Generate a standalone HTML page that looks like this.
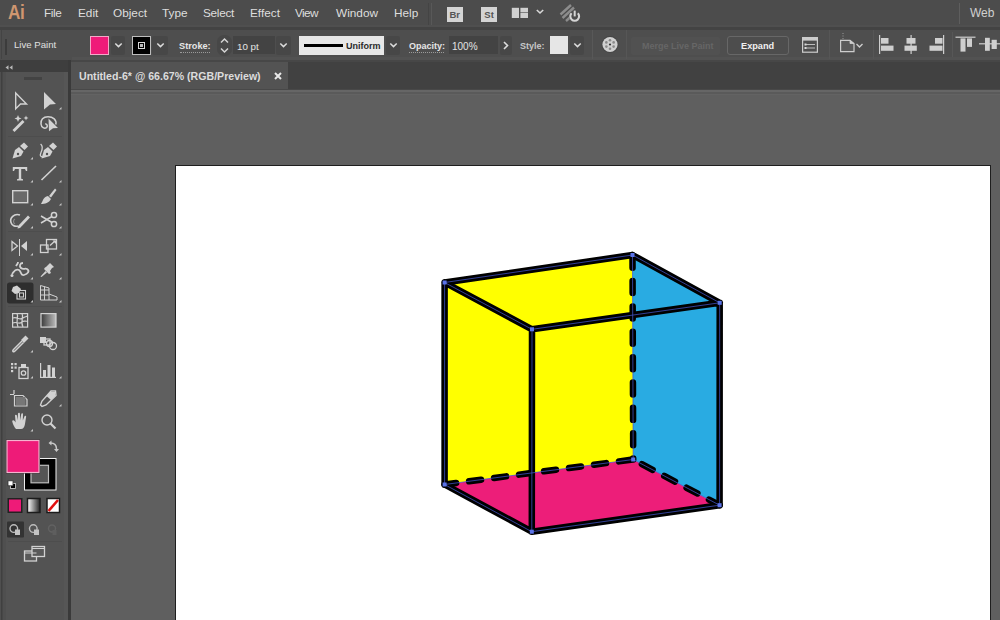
<!DOCTYPE html>
<html><head><meta charset="utf-8">
<style>
*{margin:0;padding:0;box-sizing:border-box}
html,body{width:1000px;height:620px;overflow:hidden;background:#5d5d5d;font-family:"Liberation Sans",sans-serif}
.a{position:absolute}
#menubar{left:0;top:0;width:1000px;height:26.5px;background:#4c4c4c;border-bottom:2.5px solid #4f4f4f}
#mline{left:0;top:26.5px;width:1000px;height:3px;background:#434343}
#optbar{left:0;top:29.5px;width:1000px;height:30.5px;background:#4e4e4e}
#tabbar{left:71px;top:60px;width:929px;height:29px;background:#414141}
#toolhdr{left:0;top:60px;width:68px;height:12px;background:#3e3e3e}
#toolbar{left:0;top:72px;width:68px;height:548px;background:#4f4f4f}
#toolin{left:6px;top:72px;width:58px;height:548px;background:#535353}
#gap{left:68px;top:60px;width:3px;height:560px;background:#3a3a3a}
#canvas{left:71px;top:89px;width:929px;height:531px;background:#5f5f5f}
#tab{left:71px;top:61.5px;width:217px;height:27.5px;background:#535353}
.menu{top:6px;font-size:11.8px;color:#dedede;white-space:nowrap;line-height:14px}
.ot{font-size:10px;color:#e0e0e0;white-space:nowrap;line-height:12px}
.dd{background:#474747;border-radius:2px}
.inp{background:#434343}
#artboard{left:175px;top:165px;width:816px;height:460px;background:#fff;border:1px solid #1e1e1e}
svg{position:absolute;overflow:visible}
</style></head><body>
<div class="a" id="menubar"></div>
<div class="a" id="mline"></div>
<div class="a" id="optbar"></div>
<div class="a" id="toolhdr"></div>
<div class="a" id="toolbar"></div>
<div class="a" id="toolin"></div>
<div class="a" style="left:64px;top:72px;width:4px;height:548px;background:#565656"></div>
<div class="a" id="gap"></div>
<div class="a" id="tabbar"></div>
<div class="a" id="tab"></div>
<div class="a" id="canvas"></div>
<div class="a" style="left:71px;top:88.5px;width:929px;height:1.5px;background:#484848"></div>
<div class="a" style="left:71px;top:90px;width:929px;height:2px;background:#666"></div>
<div class="a" style="left:71px;top:92px;width:929px;height:2px;background:#5a5a5a"></div>
<div class="a" style="left:71px;top:94px;width:929px;height:1px;background:#636363"></div>
<div class="a" id="artboard"></div>

<!-- CUBE -->
<svg style="left:0;top:0" width="1000" height="620" viewBox="0 0 1000 620">
<g stroke="none">
<polygon points="444.6,282.5 632.5,255 633.2,459.5 444.6,484.5" fill="#ffff00"/>
<polygon points="444.6,484.5 633.2,459.5 719.6,505.2 531.8,531.7" fill="#ed1e79"/>
<polygon points="632.5,255 719.7,302.8 719.6,505.2 633.2,459.5" fill="#29abe2"/>
</g>
<g fill="none" stroke="#000" stroke-width="6.5" stroke-linecap="round" stroke-linejoin="round">
<path d="M444.6,282.5 L632.5,255 M444.6,282.5 L532,329.3 M632.5,255 L719.7,302.8 M532,329.3 L719.7,302.8 M444.6,282.5 L444.6,484.5 M532,329.3 L531.8,531.7 M719.7,302.8 L719.6,505.2 M444.6,484.5 L531.8,531.7 L719.6,505.2"/>
<path stroke-dasharray="12 13.2" stroke-dashoffset="0.45" d="M444.6,484.5 L633.2,459.5"/>
<path stroke-dasharray="12.1 13.2" stroke-dashoffset="-9.85" d="M633.2,459.5 L719.6,505.2"/>
<path stroke-dasharray="12 13.37" stroke-dashoffset="-0.65" d="M632.5,255 L633.2,459.5"/>
</g>
<g fill="none" stroke="#4356c8" stroke-width="0.75"><path d="M444.6,282.5 L632.5,255 M444.6,282.5 L532,329.3 M632.5,255 L719.7,302.8 M532,329.3 L719.7,302.8 M444.6,282.5 L444.6,484.5 M532,329.3 L531.8,531.7 M719.7,302.8 L719.6,505.2 M444.6,484.5 L531.8,531.7 L719.6,505.2 M444.6,484.5 L633.2,459.5 L719.6,505.2 M632.5,255 L633.2,459.5"/></g>
<g fill="#5b73e8"><rect x="442.6" y="280.5" width="4" height="4"/><rect x="530" y="327.3" width="4" height="4"/><rect x="630.5" y="253" width="4" height="4"/><rect x="717.7" y="300.8" width="4" height="4"/><rect x="442.6" y="482.5" width="4" height="4"/><rect x="529.8" y="529.7" width="4" height="4"/><rect x="631.2" y="457.5" width="4" height="4"/><rect x="717.6" y="503.2" width="4" height="4"/></g>
</svg>
<!-- MENU BAR -->
<div class="a" style="left:8px;top:1px;font-size:21px;color:#cf9670;font-weight:700;letter-spacing:-0.5px;line-height:22px;transform:scaleX(0.82);transform-origin:0 0">Ai</div>
<div class="a menu" style="left:44px;letter-spacing:-0.4px">File</div>
<div class="a menu" style="left:78px">Edit</div>
<div class="a menu" style="left:113px">Object</div>
<div class="a menu" style="left:162px">Type</div>
<div class="a menu" style="left:203px;letter-spacing:-0.3px">Select</div>
<div class="a menu" style="left:250px">Effect</div>
<div class="a menu" style="left:295px;letter-spacing:-0.6px">View</div>
<div class="a menu" style="left:336px">Window</div>
<div class="a menu" style="left:394px">Help</div>
<div class="a" style="left:428px;top:3px;width:1px;height:22px;background:#444"></div>
<div class="a" style="left:431px;top:3px;width:1px;height:22px;background:#585858"></div>
<div class="a" style="left:447px;top:6.5px;width:15.5px;height:15.3px;background:#d4d4d4;color:#555;font-size:9.5px;font-weight:700;text-align:center;line-height:15.5px">Br</div>
<div class="a" style="left:481.3px;top:6.5px;width:15.5px;height:15.3px;background:#d4d4d4;color:#555;font-size:9.5px;font-weight:700;text-align:center;line-height:15.5px">St</div>
<svg style="left:511px;top:7px" width="40" height="12" viewBox="0 0 40 12">
<rect x="0.8" y="0.8" width="7.2" height="10.2" fill="#d0d0d0"/><rect x="9.4" y="0.8" width="7.6" height="4.6" fill="#d0d0d0"/><rect x="9.4" y="6" width="7.6" height="5" fill="#d0d0d0"/>
<path d="M25.8,3 L29,6 L32.2,3" fill="none" stroke="#d8d8d8" stroke-width="1.6"/>
</svg>
<svg style="left:558px;top:2px" width="24" height="22" viewBox="0 0 24 22">
<path d="M2.5,12.5 L13,3 M4.5,16 L16,5.5 M8,19 L18,10" stroke="#8c8c8c" stroke-width="2.4" fill="none"/>
<circle cx="16.7" cy="14.2" r="5.6" fill="#4c4c4c"/>
<path d="M13.6,11.2 A4.4,4.4 0 1 0 19.8,11.2" fill="none" stroke="#d4d4d4" stroke-width="2.1"/>
<rect x="15.7" y="8.6" width="2" height="5.8" fill="#d4d4d4"/>
</svg>
<div class="a" style="left:959px;top:3px;width:1px;height:21px;background:#5e5e5e"></div>
<div class="a menu" style="left:970px;font-size:12px;color:#d0d0d0">Web</div>

<!-- OPTIONS BAR -->
<div class="a" style="left:1px;top:30px;width:1px;height:29px;background:#444"></div>
<div class="a" style="left:5px;top:39px;width:2px;height:16px;background:#3c3c3c"></div>
<div class="a ot" style="left:14px;top:39px;font-size:9.6px">Live Paint</div>
<div class="a" style="left:72px;top:57px;width:928px;height:3px;background:#525252"></div>
<div class="a" style="left:71px;top:60px;width:929px;height:2px;background:#474747"></div>
<div class="a" style="left:90px;top:36px;width:19px;height:19px;background:#ef1b79;border:1px solid #f4a8c8"></div>
<div class="a dd" style="left:111px;top:36px;width:14px;height:19px"></div>
<svg style="left:114px;top:42.3px" width="9" height="6" viewBox="0 0 9 6"><path d="M1.3,1.5 L4.5,4.6 L7.7,1.5" fill="none" stroke="#dcdcdc" stroke-width="1.5"/></svg>
<div class="a" style="left:132px;top:36px;width:19px;height:19px;background:#000;border:1px solid #bdbdbd"></div>
<div class="a" style="left:137.6px;top:41.5px;width:7.4px;height:7.4px;border:1.3px solid #d8d8d8;background:#000"></div>
<div class="a" style="left:139.7px;top:43.6px;width:3.2px;height:3.2px;background:#bbb"></div>
<div class="a dd" style="left:152px;top:36px;width:16px;height:19px"></div>
<svg style="left:156px;top:42.3px" width="9" height="6" viewBox="0 0 9 6"><path d="M1.3,1.5 L4.5,4.6 L7.7,1.5" fill="none" stroke="#dcdcdc" stroke-width="1.5"/></svg>
<div class="a ot" style="left:179px;top:40px;font-weight:700;font-size:9.2px;color:#e6e6e6">Stroke:</div>
<div class="a" style="left:180px;top:52px;width:30px;height:1px;border-top:1px dotted #9a9a9a"></div>
<div class="a" style="left:217px;top:35px;width:15px;height:21px;background:#474747;border-radius:7px"></div>
<svg style="left:219px;top:37px" width="11" height="17" viewBox="0 0 11 17"><path d="M2,5.5 L5.5,2 L9,5.5 M2,11.5 L5.5,15 L9,11.5" fill="none" stroke="#d4d4d4" stroke-width="1.5"/></svg>
<div class="a inp" style="left:233px;top:36px;width:42px;height:18px"></div>
<div class="a ot" style="left:237px;top:40.5px;color:#e4e4e4;font-size:9.8px">10 pt</div>
<div class="a dd" style="left:276px;top:36px;width:15px;height:19px"></div>
<svg style="left:279px;top:42.3px" width="9" height="6" viewBox="0 0 9 6"><path d="M1.3,1.5 L4.5,4.6 L7.7,1.5" fill="none" stroke="#dcdcdc" stroke-width="1.5"/></svg>
<div class="a" style="left:299px;top:36px;width:85px;height:18.5px;background:#e8e8e8"></div>
<div class="a" style="left:304px;top:44px;width:39px;height:3px;background:#000"></div>
<div class="a ot" style="left:346px;top:40px;color:#2a2a2a;font-size:9px;font-weight:700">Uniform</div>
<div class="a dd" style="left:386px;top:36px;width:14px;height:19px"></div>
<svg style="left:389px;top:42.3px" width="9" height="6" viewBox="0 0 9 6"><path d="M1.3,1.5 L4.5,4.6 L7.7,1.5" fill="none" stroke="#dcdcdc" stroke-width="1.5"/></svg>
<div class="a ot" style="left:409px;top:40px;font-weight:700;font-size:9px;color:#e6e6e6">Opacity:</div>
<div class="a" style="left:409px;top:52px;width:35px;height:1px;border-top:1px dotted #9a9a9a"></div>
<div class="a inp" style="left:449px;top:36px;width:49px;height:18px"></div>
<div class="a ot" style="left:452px;top:40.5px;color:#e4e4e4;font-size:10px">100%</div>
<div class="a dd" style="left:500px;top:36px;width:12px;height:19px"></div>
<svg style="left:503px;top:41px" width="6" height="9" viewBox="0 0 6 9"><path d="M1,1 L4.5,4.5 L1,8" fill="none" stroke="#dcdcdc" stroke-width="1.6"/></svg>
<div class="a ot" style="left:520px;top:40px;color:#c8c8c8;font-size:9px;font-weight:700">Style:</div>
<div class="a" style="left:550px;top:36px;width:18px;height:18px;background:#e6e6e6"></div>
<div class="a dd" style="left:570px;top:36px;width:14px;height:19px"></div>
<svg style="left:573px;top:42.3px" width="9" height="6" viewBox="0 0 9 6"><path d="M1.3,1.5 L4.5,4.6 L7.7,1.5" fill="none" stroke="#dcdcdc" stroke-width="1.5"/></svg>
<div class="a" style="left:592px;top:30px;width:1px;height:29px;background:#585858"></div>
<svg style="left:601px;top:36px" width="18" height="17" viewBox="0 0 18 17">
<circle cx="9" cy="8.5" r="8.4" fill="#454545"/><circle cx="9" cy="8.5" r="7.6" fill="#d0d0d0"/>
<circle cx="12.64" cy="10.60" r="1.3" fill="#8a8a8a"/><circle cx="9.00" cy="12.70" r="1.3" fill="#8a8a8a"/><circle cx="5.36" cy="10.60" r="1.3" fill="#8a8a8a"/><circle cx="5.36" cy="6.40" r="1.3" fill="#8a8a8a"/><circle cx="9.00" cy="4.30" r="1.3" fill="#8a8a8a"/><circle cx="12.64" cy="6.40" r="1.3" fill="#8a8a8a"/><circle cx="9" cy="8.5" r="1.1" fill="#333"/>
</svg>
<div class="a" style="left:626px;top:30px;width:1px;height:29px;background:#565656"></div>
<div class="a" style="left:631px;top:37px;width:89px;height:18px;background:#515151;border-radius:2px"></div>
<div class="a ot" style="left:642px;top:40px;color:#666;font-weight:700;font-size:9px">Merge Live Paint</div>
<div class="a" style="left:727px;top:35.5px;width:62px;height:19.5px;border:1.3px solid #676767;border-radius:3px;background:#4d4d4d"></div>
<div class="a ot" style="left:741px;top:40px;color:#f0f0f0;font-weight:700;font-size:9.2px">Expand</div>
<svg style="left:802px;top:37px" width="16" height="16" viewBox="0 0 16 16">
<rect x="0.6" y="0.6" width="14.8" height="14.6" fill="none" stroke="#cdcdcd" stroke-width="1.2"/>
<rect x="0.6" y="0.6" width="14.8" height="3" fill="#cdcdcd"/>
<path d="M4,7.5 H13 M4,11 H13" stroke="#bdbdbd" stroke-width="1.1"/>
<rect x="2.5" y="6.5" width="2" height="2" fill="#d8d8d8"/><rect x="2.5" y="10" width="2" height="2" fill="#d8d8d8"/>
</svg>
<div class="a" style="left:829px;top:30px;width:1px;height:29px;background:#565656"></div>
<svg style="left:838px;top:32px" width="28" height="22" viewBox="0 0 28 22">
<path d="M5,1 V2 M5,3.5 V4.5 M5,6 V7" stroke="#9a9a9a" stroke-width="1"/>
<path d="M2.6,8.3 H12 L16,11.5 V19.6 H2.6 Z" fill="#5a5a5a" stroke="#cdcdcd" stroke-width="1.2"/>
<path d="M12,8.3 V11.5 H16" fill="#cdcdcd" stroke="#cdcdcd" stroke-width="0.8"/>
<path d="M18.5,12 L21.5,15 L24.5,12" fill="none" stroke="#cdcdcd" stroke-width="1.4"/>
</svg>
<div class="a" style="left:873px;top:30px;width:1px;height:29px;background:#565656"></div>
<svg style="left:870px;top:30px" width="130" height="30" viewBox="870 30 130 30">
<g fill="#cfcfcf">
<rect x="879" y="35" width="1.2" height="19"/><rect x="881" y="38" width="7.5" height="5.7"/><rect x="881" y="45.6" width="12.5" height="5.2"/>
<rect x="910.5" y="35" width="1.2" height="19"/><rect x="906.5" y="38" width="9" height="5.7"/><rect x="904.5" y="45.6" width="12.3" height="5.2"/>
<rect x="943" y="35" width="1.2" height="19"/><rect x="935" y="38" width="7.5" height="5.7"/><rect x="929.5" y="45.6" width="13" height="5.2"/>
<rect x="955.5" y="36.6" width="20" height="1.2"/><rect x="960.5" y="38.4" width="5" height="13.2"/><rect x="967" y="38.4" width="5" height="8.5"/>
<rect x="979" y="43.2" width="21" height="1.2"/><rect x="985" y="37.8" width="4.8" height="13"/><rect x="991.6" y="39.8" width="5.2" height="9.2"/>
</g>
<rect x="952" y="32" width="1" height="25" fill="#575757"/>
</svg>

<!-- TAB BAR -->
<svg style="left:5px;top:65px" width="9" height="5" viewBox="0 0 9 5"><path d="M0.5,2.5 L3.5,0.3 V4.7 Z M4.5,2.5 L7.5,0.3 V4.7 Z" fill="#b8b8b8"/></svg>
<div class="a" style="left:79px;top:70px;font-size:10.6px;font-weight:700;color:#dcdcdc;white-space:nowrap;line-height:13px">Untitled-6* @ 66.67% (RGB/Preview)</div>
<svg style="left:274px;top:72px" width="8" height="8" viewBox="0 0 8 8"><path d="M1,1 L7,7 M7,1 L1,7" stroke="#e8e8e8" stroke-width="2"/></svg>

<!-- TOOLBAR -->
<div class="a" style="left:24px;top:77px;width:18px;height:3px;background:#434343"></div>
<svg style="left:0;top:0" width="70" height="620" viewBox="0 0 70 620">
<g fill="#404040"><rect x="1" y="72" width="1.5" height="548"/></g>
<g fill="#4d4d4d"><rect x="8" y="136" width="54" height="1"/><rect x="8" y="231" width="54" height="1"/><rect x="8" y="306" width="54" height="1"/><rect x="8" y="541" width="54" height="1"/></g>
<rect x="7" y="282.5" width="26.5" height="21" rx="2.5" fill="#2e2e2e"/>
<rect x="7" y="521.5" width="17" height="16" rx="1" fill="#333"/>
<g fill="#c4c4c4">
<!-- submenu triangles -->
<path d="M61.5,106.9 V109.5 H58.9 Z"/>
<path d="M33.0,156.9 V159.5 H30.4 Z"/><path d="M33.0,179.9 V182.5 H30.4 Z"/><path d="M61.5,179.9 V182.5 H58.9 Z"/>
<path d="M33.0,202.9 V205.5 H30.4 Z"/><path d="M61.5,202.9 V205.5 H58.9 Z"/>
<path d="M33.0,225.9 V228.5 H30.4 Z"/><path d="M61.5,225.9 V228.5 H58.9 Z"/>
<path d="M33.0,252.9 V255.5 H30.4 Z"/><path d="M61.5,252.9 V255.5 H58.9 Z"/>
<path d="M33.0,276.9 V279.5 H30.4 Z"/><path d="M61.5,276.9 V279.5 H58.9 Z"/>
<path d="M33.0,299.9 V302.5 H30.4 Z"/><path d="M61.5,299.9 V302.5 H58.9 Z"/>
<path d="M33.0,349.9 V352.5 H30.4 Z"/>
<path d="M33.0,375.9 V378.5 H30.4 Z"/><path d="M61.5,375.9 V378.5 H58.9 Z"/>
<path d="M61.5,403.9 V406.5 H58.9 Z"/>
<path d="M33.0,428.9 V431.5 H30.4 Z"/>
</g>
<g fill="none" stroke="#d2d2d2" stroke-width="1.4" stroke-linejoin="miter">
<!-- selection -->
<path d="M15.7,93 L26.5,104 L20.5,104 L15.7,108.8 Z"/>
</g>
<g fill="#d2d2d2">
<path d="M44,92 L56,104 L50,104.5 L44,109.5 Z"/>
<!-- magic wand -->
<path d="M12.5,130 L22.5,120 L24.5,122 L14.5,132 Z"/>
<path d="M18,115 L19,117.5 L21.5,118.5 L19,119.5 L18,122 L17,119.5 L14.5,118.5 L17,117.5 Z"/>
<path d="M26,115.5 L26.7,117.3 L28.5,118 L26.7,118.7 L26,120.5 L25.3,118.7 L23.5,118 L25.3,117.3 Z"/>
<!-- lasso arrow -->
<path d="M48.5,118.6 L58,128 L53,128.3 L49,131.2 Z"/>
</g>
<g fill="none" stroke="#d2d2d2" stroke-width="1.5">
<path d="M55.8,124.5 C57,120 53,116.7 48,116.7 C43,116.7 40.6,120 41,124 C41.4,127.5 44.5,129.2 46.5,127.6 C48,126.2 47.2,123.6 45.2,124"/>
</g>
<g fill="#d2d2d2">
<!-- pen nib -->
<path d="M20,146 L24,142.5 L28,146.5 L24.5,150 Z"/>
<path d="M19,147 L23.5,151.5 L21,156 L12.5,158.5 L15,150 Z"/>
<!-- curvature nib -->
<path d="M49,146 L53,142.5 L57,146.5 L53.5,150 Z"/>
<path d="M48,147 L52.5,151.5 L50,156 L41.5,158.5 L44,150 Z"/>
</g>
<circle cx="18" cy="154" r="1.2" fill="#4f4f4f"/><circle cx="47" cy="154" r="1.2" fill="#4f4f4f"/>
<path d="M40.6,144 C43.2,146.2 42.4,149.5 41,152.5 C39.6,155.5 40.6,157.6 43.5,156.6" fill="none" stroke="#d2d2d2" stroke-width="1.3"/>
<g fill="#d2d2d2">
<!-- T -->
<path d="M12.8,167 H27.2 V171 H26 L25,169 H21.2 V178.8 L23,179.2 V180.5 H17 V179.2 L18.8,178.8 V169 H15 L14,171 H12.8 Z"/>
</g>
<path d="M41.5,180 L56,166" stroke="#d2d2d2" stroke-width="1.6"/>
<!-- rectangle -->
<rect x="12.7" y="190.7" width="15" height="12" fill="#6a6a6a" stroke="#d2d2d2" stroke-width="1.4"/>
<g fill="#d2d2d2">
<!-- paintbrush -->
<path d="M49,196 L55,188.5 L56.5,190 L51,197.5 Z"/>
<path d="M48,196 L51,199 C49,203 45,204 41,204 C43,201 43,197 48,196 Z"/>
</g>
<!-- shaper -->
<path d="M20,215 C14,213 9.5,218 11,222.5 C12,225.5 15,227 18,226" fill="none" stroke="#d2d2d2" stroke-width="1.6"/>
<path d="M15,219 C13,220 13,223 15,224" fill="none" stroke="#8a8a8a" stroke-width="1.2"/>
<path d="M18,226 L28,215.5 L30,217.5 L20,228 L17.5,228.5 Z" fill="#d2d2d2"/>
<!-- scissors -->
<g fill="none" stroke="#d2d2d2" stroke-width="1.5">
<circle cx="54" cy="215" r="2.6"/><circle cx="54" cy="224" r="2.6"/>
<path d="M52,216.5 L41,223 M52,222.5 L41,216"/>
</g>
<!-- reflect -->
<g fill="#d2d2d2">
<path d="M12,241.5 L17.5,246 L12,250.5 Z" fill="none" stroke="#d2d2d2" stroke-width="1.3"/>
<path d="M27,241 L21,246 L27,251 Z"/>
<rect x="19" y="239" width="1" height="17"/>
</g>
<!-- scale -->
<g fill="none" stroke="#d2d2d2" stroke-width="1.3">
<rect x="46.5" y="239.5" width="10" height="9.5"/>
<rect x="40.5" y="245" width="7.5" height="7.5"/>
<path d="M50,245.5 L55,241"/>
</g>
<path d="M52.5,240.5 L56,240.5 L56,244 Z" fill="#d2d2d2"/>
<!-- warp -->
<g fill="none" stroke="#d2d2d2" stroke-width="1.8">
<path d="M12,274 C14,272 15,268 19,270 C22,272 20,276 24,275 C28,274 30,271 27,269 C25,268 23,270 21,268 C19,266 20,263 23,263"/>
<path d="M16,266 C17,264 18,264 18,262"/>
</g>
<circle cx="12" cy="275.5" r="1.5" fill="#d2d2d2"/>
<!-- pin -->
<g fill="#d2d2d2">
<path d="M46,267 L50,263 L54,267 L52,268 L50,271 L51,273 L49,274 L44,269 L45,267.5 Z"/>
<path d="M45.5,271 L40.5,276.5 L41.5,277 L47,272.5 Z"/>
</g>
<!-- live paint bucket -->
<g fill="none" stroke="#cfcfcf" stroke-width="1.1">
<rect x="17" y="290.5" width="8.5" height="8.5"/>
<rect x="19.5" y="293" width="4" height="4"/>
</g>
<path d="M13,287 L17,285.5 L21,289 L19,293 L15,294 L11.5,291 Z" fill="#d2d2d2"/>
<!-- perspective grid -->
<g fill="none" stroke="#d2d2d2" stroke-width="1">
<path d="M40.5,285.5 L49,288 V300 H40.5 Z"/>
<path d="M40.5,290 H49 M40.5,295 H49 M44.5,286.5 V300"/>
<path d="M49,294 L57,297 V300 H49"/>
</g>
<!-- mesh -->
<g fill="none" stroke="#d2d2d2" stroke-width="1.2">
<rect x="12.6" y="313.6" width="15" height="13.5"/>
<path d="M13,318 C17,316 19,321 23,318 C25,316.5 26,317 27.5,316 M13,323 C16,321 19,325 22,322 C24,320 26,322 27.5,321 M17,313.5 C19,317 15,321 18,327 M22,313.5 C24,317 20,322 23,327"/>
</g>
<!-- gradient -->
<defs><linearGradient id="gr" x1="0" x2="1"><stop offset="0" stop-color="#3a3a3a"/><stop offset="1" stop-color="#bdbdbd"/></linearGradient>
<linearGradient id="gr2" x1="0" x2="1"><stop offset="0" stop-color="#ffffff"/><stop offset="1" stop-color="#222"/></linearGradient></defs>
<rect x="41" y="313.6" width="15" height="13.5" fill="url(#gr)" stroke="#d2d2d2" stroke-width="1.2"/>
<!-- eyedropper -->
<g fill="none" stroke="#d2d2d2" stroke-width="1.5">
<path d="M22,341 L14,349 C12.5,350.5 12.5,351 13,351.5 C13.5,352 14,352 15.5,350.5 L23.5,342.5"/>
</g>
<path d="M21,340 L25.5,335.5 L28.5,338.5 L24,343 Z" fill="#d2d2d2"/>
<!-- blend -->
<g fill="#d2d2d2"><rect x="40" y="337" width="6" height="6"/></g>
<g fill="none" stroke="#d2d2d2" stroke-width="1.3">
<rect x="44" y="339" width="6" height="6"/>
<circle cx="53" cy="346" r="3.5"/><circle cx="49.5" cy="343.5" r="3"/>
</g>
<!-- symbol sprayer -->
<g fill="#d2d2d2">
<rect x="11" y="363" width="2.2" height="2.2"/><rect x="14.5" y="363" width="2.2" height="2.2"/><rect x="11" y="366.5" width="2.2" height="2.2"/><rect x="14.5" y="366.5" width="2.2" height="2.2"/><rect x="11" y="370" width="2.2" height="2.2"/>
<rect x="21" y="364" width="5" height="3"/>
</g>
<g fill="none" stroke="#d2d2d2" stroke-width="1.3">
<rect x="19" y="367.5" width="9" height="11"/>
<circle cx="23.5" cy="373" r="2.2"/>
</g>
<!-- column graph -->
<g fill="#d2d2d2">
<rect x="40" y="363" width="1.2" height="15"/><rect x="40" y="376.8" width="16" height="1.2"/>
<rect x="43" y="370" width="3" height="7"/><rect x="47.5" y="365" width="3" height="12"/><rect x="52" y="367.5" width="3" height="9.5"/>
</g>
<!-- artboard -->
<g fill="none" stroke="#d2d2d2" stroke-width="1.2">
<path d="M14,390 V394 M10,394.5 H14"/>
<path d="M14.5,395.5 H23 L27,399.5 V406 H14.5 Z"/>
</g>
<rect x="16" y="397" width="9.5" height="8" fill="#777"/>
<!-- pencil/eraser -->
<g fill="#d2d2d2">
<path d="M51,391 L55.5,391 L56,395.5 L46,405 L42,406.5 L40.5,405 L42,401 Z" fill="none" stroke="#d2d2d2" stroke-width="1.4"/>
<path d="M50,392 L55,392 L55,396 L51,400 L46.5,396 Z"/>
</g>
<!-- hand -->
<path d="M16,429 C14.2,427 13.2,425 12.3,421.8 C11.9,420.2 13.6,419.6 14.6,421 L15.6,422.6 L15,415.6 C15,414.3 16.8,414.3 16.9,415.6 L17.6,420.2 L18,413.6 C18.1,412.3 19.9,412.3 19.9,413.6 L20.3,420.2 L21.2,414.2 C21.3,412.9 23.1,412.9 23,414.2 L22.8,420.6 L24.4,416.6 C24.7,415.4 26.4,415.7 26.1,416.9 L25,424 C24.4,427.5 23.2,429 21,429 Z" fill="#d2d2d2"/>
<!-- zoom -->
<circle cx="47" cy="420" r="5" fill="none" stroke="#d2d2d2" stroke-width="1.4"/>
<path d="M50.5,423.5 L55.5,428.5" stroke="#d2d2d2" stroke-width="2.2"/>
<!-- fill / stroke swatches -->
<rect x="24.5" y="458.5" width="31.5" height="31.5" fill="#000" stroke="#eee" stroke-width="1"/>
<rect x="31" y="465.3" width="17.5" height="17.5" fill="#555" stroke="#bdbdbd" stroke-width="1.2"/>
<rect x="6" y="439.5" width="34" height="34" fill="#2a2a2a"/>
<rect x="7" y="440.5" width="32" height="32" fill="#ee1b78" stroke="#f5b3cf" stroke-width="1.2"/>
<!-- swap icon -->
<g fill="none" stroke="#c8c8c8" stroke-width="1.5"><path d="M50.5,443 C55,443 56.5,445 56.5,449"/></g>
<path d="M48.5,443 L51.5,440.5 V445.5 Z M56.5,452 L54,449 H59 Z" fill="#c8c8c8"/>
<!-- default icon -->
<rect x="10.5" y="483.5" width="5" height="5" fill="#000" stroke="#ddd" stroke-width="0.8"/>
<rect x="8" y="480.8" width="5" height="5" fill="#fff" stroke="#333" stroke-width="0.8"/>
<!-- color mode row -->
<rect x="7.5" y="498" width="15" height="15" fill="#222"/>
<rect x="9" y="499.5" width="12" height="12" fill="#ee1b78"/>
<rect x="27.5" y="498.5" width="12.5" height="14" fill="url(#gr2)" stroke="#1c1c1c" stroke-width="1.5"/>
<rect x="47" y="498.5" width="12.5" height="14" fill="#fff" stroke="#1c1c1c" stroke-width="1.5"/>
<path d="M48.5,511 L58,500" stroke="#e01010" stroke-width="2.6"/>
<!-- draw modes -->
<g fill="none" stroke="#bdbdbd" stroke-width="1.4">
<circle cx="13.8" cy="528.6" r="3.8"/><circle cx="33.3" cy="528.6" r="3.8"/>
</g>
<rect x="15" y="529.5" width="5" height="5.5" fill="#c4c4c4"/><rect x="34" y="529.5" width="5" height="5.5" fill="#c4c4c4"/>
<g fill="none" stroke="#626262" stroke-width="1.4"><circle cx="52" cy="528.5" r="3.5"/></g><rect x="52.5" y="530" width="4" height="5" fill="#5e5e5e"/>
<!-- screen mode -->
<g fill="#5a5a5a" stroke="#d2d2d2" stroke-width="1.3">
<rect x="24.5" y="551" width="12" height="10"/>
<rect x="32" y="546.5" width="12.5" height="10"/>
</g>
<path d="M24.5,553 H36.5 M32,548.5 H44.5" stroke="#d2d2d2" stroke-width="1"/>
</svg>


</body></html>
